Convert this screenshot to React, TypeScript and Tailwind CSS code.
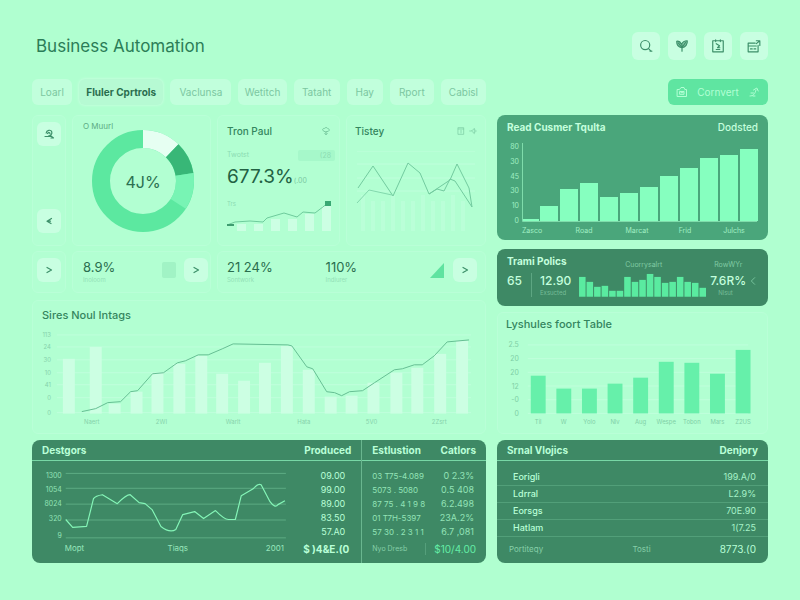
import React from "react";

const tabs = ["Loarl", "Fluler Cprtrols", "Vaclunsa", "Wetitch", "Tataht", "Hay", "Rport", "Cabisl"];

const quarterBars = [2, 15, 32, 38, 24, 28, 34, 45, 53, 63, 66, 72];
const quarterTicks: [string, number][] = [["80", 7], ["30", 22], ["45", 37], ["30", 51], ["10", 66], ["0", 81]];
const quarterMonths: [string, number][] = [["Zasco", 35], ["Road", 87], ["Marcat", 140], ["Frid", 188], ["Julchs", 237]];

const pulseBars = [20, 15, 10, 11, 6, 6, 20, 15, 17, 23, 20, 14, 15, 20, 15, 14, 9];

const tableBars: [string, number][] = [
  ["Til", 38], ["W", 25], ["Yolo", 25], ["Nlv", 30], ["Aug", 36], ["Wespe", 52], ["Tobon", 51], ["Mars", 40], ["Z2US", 64],
];
const tableTicks = ["2.5", "20", "20", "12", "-0", "0"];

const intagBars: [number, number][] = [
  [36, 55], [63, 67], [82, 10], [104, 22], [125, 41], [147, 50], [169, 58], [190, 40], [212, 33], [233, 51],
  [255, 68], [277, 44], [299, 17], [320, 18], [342, 31], [365, 41], [386, 46], [409, 60], [431, 73],
];
const intagTicks: [string, number][] = [["113", 12], ["24", 24], ["30", 37], ["10", 50], ["41", 62], ["0", 75], ["0", 90]];
const intagMonths: [string, number][] = [["Naert", 59], ["2WI", 129], ["Warlt", 201], ["Hata", 272], ["5V0", 340], ["2Zsrt", 408]];

const designTicks: [string, number, number][] = [["1300", 15, 12], ["1054", 29, 27], ["8024", 43, 43], ["320", 58, 59], ["9", 75, 77]];

const produced = ["09.00", "99.00", "89.00", "83.50", "57.A0"];
const estimates: [string, string][] = [
  ["03 T75-4.089", "0 2.3%"],
  ["5073 . 5080", "0.5 408"],
  ["87 75 . 4 1 9 8", "6.2.498"],
  ["01 T7H-5397", "23A.2%"],
  ["57 30 . 2 3 1 1", "6.7 ,081"],
];
const regions: [string, string][] = [["Eorigli", "199.A/0"], ["Ldrral", "L2.9%"], ["Eorsgs", "70E.90"], ["Hatlam", "1(7.25"]];

function Panel({ className = "", children }: { className?: string; children: React.ReactNode }) {
  return <section className={`min-w-0 rounded-md border border-[#b9ffd7] bg-[#b2ffd2] ${className}`}>{children}</section>;
}

function IconButton({ label, className = "", children }: { label: string; className?: string; children: React.ReactNode }) {
  return (
    <button
      type="button"
      aria-label={label}
      className={`flex shrink-0 items-center justify-center rounded-md bg-[#c8ffe1] text-[#3c8f69] ${className}`}
    >
      {children}
    </button>
  );
}

function Glyph({ size = "size-3", children }: { size?: string; children: React.ReactNode }) {
  return (
    <svg
      viewBox="0 0 12 12"
      className={size}
      fill="none"
      stroke="currentColor"
      strokeWidth="1"
      strokeLinecap="round"
      strokeLinejoin="round"
      aria-hidden="true"
    >
      {children}
    </svg>
  );
}

const ChevronRight = () => (
  <Glyph>
    <path d="M4 3.5 8.5 6 4 8.500" strokeWidth="1.2" />
  </Glyph>
);

function Header() {
  return (
    <header className="flex h-7 items-center justify-between">
      <h1 className="pl-1 text-[17px] leading-6 text-[#2b7d57]">Business Automation</h1>
      <div className="flex gap-2">
        <IconButton label="Search" className="size-7">
          <Glyph size="size-3.5">
            <circle cx="5.3" cy="5.2" r="3.9" />
            <path d="M8.4 8.4 10 10.2M9.5 10.4h1.500" />
          </Glyph>
        </IconButton>
        <IconButton label="Favourites" className="size-7">
          <Glyph size="size-3.5">
            <path
              d="M1.5 2C3 1.500 4.500 2.500 5.600 4.500 6.500 2.500 8 1.500 10.500 1.500 10.800 4.500 9 7.200 6 7.500 3 7.200 1.400 5 1.500 2Z"
              fill="currentColor"
              fillOpacity=".5"
            />
            <path d="M6 5v5.500M3 3.500l3 4 3-4.500" />
          </Glyph>
        </IconButton>
        <IconButton label="Schedule" className="size-7">
          <Glyph size="size-3.5">
            <path d="M1.500 1.500h9v9.500h-9zM4 .8v1.400M8 .8v1.400M4.500 4l2.800 1.800L5.600 7.500h2M4.500 9h3" />
          </Glyph>
        </IconButton>
        <IconButton label="Reports" className="size-7">
          <Glyph size="size-3.5">
            <path d="M9.500 5.500V11H1V3.500h6M1 6h7M3 8.500h1.500M6 8.500h1.500M8 1.500h3v4M8 4l3-2.500" />
          </Glyph>
        </IconButton>
      </div>
    </header>
  );
}

function Toolbar() {
  return (
    <div className="mt-[19px] grid grid-cols-[454fr_271fr] gap-x-[11px]">
      <nav aria-label="Sections" className="grid h-[26px] grid-cols-[40fr_84fr_61fr_48fr_46fr_36fr_44fr_45fr] gap-[7px]">
        {tabs.map((tab, i) => (
          <button
            key={tab}
            type="button"
            aria-current={i === 1 ? "page" : undefined}
            className={
              i === 1
                ? "rounded-md bg-[#b6fad3] text-[10px] font-bold whitespace-nowrap text-[#2a6e4e] shadow-[0_0_3px_#d2ffe6]"
                : "rounded-md bg-[#c1ffdc] text-[10px] whitespace-nowrap text-[#7cc7a1]"
            }
          >
            {tab}
          </button>
        ))}
      </nav>
      <button
        type="button"
        className="flex h-[26px] w-[100px] items-center justify-between justify-self-end rounded-md bg-[#5fe5a1] px-2 text-[10px] text-[#b2ffd4]"
      >
        <Glyph>
          <path d="M1.500 3.500h2L5 1.500h3l.8 2h1.700v7h-9zM4 5.500h4v2.800H4zM4 5.500l2 1.500 2-1.500" />
        </Glyph>
        Cornvert
        <Glyph>
          <path d="M2 10c3.500 0 5-2 6-6M5.500 4 8.800 2l1.400 3M3 7h2.500M5 10h2" />
        </Glyph>
      </button>
    </div>
  );
}

function ShareDonut() {
  const ring = { cx: 51, cy: 51, r: 42, fill: "none", strokeWidth: 18, pathLength: 360 };
  return (
    <svg viewBox="0 0 102 102" className="mx-auto -mt-0.5 block w-[102px]" role="img" aria-label="Share">
      <g transform="rotate(-90 51 51)">
        <circle {...ring} className="stroke-[#5ce8a0]" />
        <circle {...ring} strokeDasharray="44 316" className="stroke-[#e6fff2]" />
        <circle {...ring} strokeDasharray="37 323" strokeDashoffset="-44" className="stroke-[#38b777]" />
        <circle {...ring} strokeDasharray="42 318" strokeDashoffset="-81" className="stroke-[#78f4b4]" />
      </g>
      <text x="51" y="52" textAnchor="middle" dominantBaseline="central" className="fill-[#2b7050] text-[16px]">
        4J%
      </text>
    </svg>
  );
}

function Overview() {
  return (
    <div className="grid grid-cols-[34fr_139fr_123fr_140fr] gap-x-1.5 gap-y-[5px]">
      <Panel className="flex h-[131px] flex-col items-center justify-between pt-1.5 pb-3">
        <IconButton label="Find" className="size-6">
          <Glyph>
            <path d="M3.200 5C3.500 2 8 1.200 8.800 4c.5 2-1 3.500-3.300 4M2 8.500h6M4.500 5.500c1-1.500 2.500-1 2.500.2M8 8l2.500 2H8" strokeWidth="1.200" />
          </Glyph>
        </IconButton>
        <IconButton label="Back" className="size-6">
          <Glyph>
            <path d="M8.500 3.500 4 6.200l4 2.300M4.500 6.200h3" strokeWidth="1.200" />
          </Glyph>
        </IconButton>
      </Panel>

      <Panel className="pt-1 pl-0.5">
        <h2 className="pl-2 text-[8px] leading-3 text-[#5cab83]">O Muurl</h2>
        <ShareDonut />
      </Panel>

      <Panel className="pt-[7px] pr-1 pl-[9px]">
        <div className="flex h-4 items-center justify-between pr-1">
          <h2 className="text-[10px] font-medium text-[#34855e]">Tron Paul</h2>
          <span className="text-[#6cbf95]">
            <Glyph size="size-2.5">
              <path d="M3 6C1 5 2 2.500 4 3c1-1.500 3.500-1.500 4 0 2 0 2.500 2.500 1 3.200L6 7zM6 7v3M4.500 9 6 10.500 7.500 9" />
            </Glyph>
          </span>
        </div>
        <div className="mt-2.5 flex h-3 items-center justify-between text-[7px] text-[#8cdcb2]">
          <span>Twotst</span>
          <span className="w-[37px] rounded-xs bg-[#a6f8ca] pr-1 text-right leading-[11px]">(28</span>
        </div>
        <p className="mt-1 flex h-6 items-center text-[19px] leading-6 text-[#226143]">
          677.3%<span className="pt-2 text-[7px] text-[#7cc9a2]">(.00</span>
        </p>
        <svg viewBox="0 0 108 36" className="mt-2 block w-full" role="img" aria-label="Trend">
          <text x="0" y="6" dominantBaseline="central" className="fill-[#8cdcb2] text-[6px]">Trs</text>
          {[7, 7, 12, 12, 17, 25].map((h, i) => (
            <rect key={i} x={10 + i * 17} y={34 - h} width="9" height={h} className="fill-[#ccffe3]" />
          ))}
          <polyline points="0,28 8,25 23,24 36,25 40,21 57,16 70,20 76,15 88,16 101,6" className="fill-none stroke-[#6ecb9c]" />
          <rect x="0" y="27" width="7" height="2" className="fill-[#3f9c70]" />
          <rect x="98" y="4" width="6" height="5" className="fill-[#39a873]" />
        </svg>
      </Panel>

      <Panel className="px-2 pt-[7px]">
        <div className="flex h-4 items-center justify-between">
          <h2 className="text-[10px] font-medium text-[#34855e]">Tistey</h2>
          <div className="flex gap-1 text-[#79c9a0]">
            <Glyph size="size-2">
              <path d="M2 1h8v10H2zM2 3h8M6 5v4" />
            </Glyph>
            <Glyph size="size-2">
              <path d="M1 6h3l4-4v8L4 6M9 4l2 2-2 2" />
            </Glyph>
          </div>
        </div>
        <svg viewBox="0 0 122 84" className="mt-3 block w-full" role="img" aria-label="History">
          {[0, 13, 27, 40].map((y) => (
            <path key={y} d={`M2 ${y}H120`} className="stroke-[#bfffdc]" />
          ))}
          {Array.from({ length: 11 }, (_, i) => (
            <rect key={i} x={6 + i * 10} y={i % 3 === 0 ? 44 : 50} width="4" height={i % 3 === 0 ? 36 : 30} className="fill-[#baffd8]" />
          ))}
          <polyline points="3,37 18,15 38,45 53,12 65,22 74,43 95,29 102,13 114,37 117,56" className="fill-none stroke-[#72cb9f]" />
          <polyline points="2,52 14,39 37,44" className="fill-none stroke-[#82d8ad]" />
          <polyline points="74,43 82,38 89,40 95,28 100,30 117,56" className="fill-none stroke-[#72cb9f]" />
        </svg>
      </Panel>

      <Panel className="flex h-[42px] items-center justify-center pb-1">
        <IconButton label="Next" className="size-6"><ChevronRight /></IconButton>
      </Panel>

      <Panel className="flex items-center pr-0.5 pb-1 pl-2.5">
        <Metric value="8.9%" note="Inoloom" />
        <span className="mr-2 ml-auto h-4 w-3.5 rounded-xs bg-[#a1f3c5]" />
        <IconButton label="Next metric" className="size-6"><ChevronRight /></IconButton>
      </Panel>

      <Panel className="col-span-2 grid grid-cols-[99fr_152fr] items-center pr-2 pb-1 pl-[9px]">
        <Metric value="21 24%" note="Sontwork" />
        <div className="flex items-center">
          <Metric value="110%" note="Indiurer" />
          <svg viewBox="0 0 16 16" className="mr-2 ml-auto size-4" aria-hidden="true">
            <path d="M1 16 15 1v15z" className="fill-[#5fe3a0]" />
          </svg>
          <IconButton label="More metrics" className="size-6"><ChevronRight /></IconButton>
        </div>
      </Panel>
    </div>
  );
}

function Metric({ value, note }: { value: string; note: string }) {
  return (
    <div className="pt-1">
      <p className="text-[13px] leading-4 text-[#2a6e4e]">{value}</p>
      <p className="text-[6px] leading-2.5 text-[#93dfb7]">{note}</p>
    </div>
  );
}

function IntagsChart() {
  return (
    <Panel className="mt-[7px] h-[134px] pt-1.5">
      <h2 className="pl-[9px] text-[11px] leading-4 font-medium text-[#34855e]">Sires Noul Intags</h2>
      <svg viewBox="0 0 454 108" className="block w-full" role="img" aria-label="Sires Noul Intags">
        {intagTicks.map(([label, y], i) => (
          <g key={i}>
            <path d={`M24 ${y}H440`} className="stroke-[#bfffdc]" />
            <text x="18" y={y} textAnchor="end" dominantBaseline="central" className="fill-[#86d2ab] text-[6px]">{label}</text>
          </g>
        ))}
        {intagBars.map(([x, h]) => (
          <rect key={x} x={x - 6} y={91 - h} width="12" height={h} className="fill-[#ccffe3]" />
        ))}
        <path
          d="M49 89 63 86 75 80 88 79 98 69 105 68 120 51 131 50 145 40 153 38 166 32 176 32 190 26 201 21 256 22 260 23 275 44 281 46 295 69 303 70 310 73 318 69 331 68 343 60 363 47 371 46 383 42 391 42 403 33 416 19 438 17"
          className="fill-none stroke-[#66be93]"
          strokeLinejoin="round"
        />
        {intagMonths.map(([label, x]) => (
          <text key={label} x={x} y="99" textAnchor="middle" dominantBaseline="central" className="fill-[#86d2ab] text-[6px]">{label}</text>
        ))}
      </svg>
    </Panel>
  );
}

function DesignsCard() {
  const head = "h-[21px] border-b border-[#78d8a6] text-[10px] font-bold";
  return (
    <section className="mt-1.5 grid h-[123px] grid-cols-[332fr_122fr] overflow-hidden rounded-lg bg-[#3e8965] text-[#b9ffd7]">
      <div className="grid grid-cols-[270fr_62fr] border-r border-[#69b68f]">
        <div>
          <h2 className={`${head} pl-2.5 leading-5`}>Destgors</h2>
          <svg viewBox="0 0 270 102" className="block w-full" role="img" aria-label="Destgors">
            {designTicks.map(([label, ty, gy]) => (
              <g key={label}>
                <path d={`M34 ${gy}.5H256`} className="stroke-[#5dac84]" />
                <text x="30" y={ty} textAnchor="end" dominantBaseline="central" className="fill-[#93e3b7] text-[7px]">{label}</text>
              </g>
            ))}
            <path
              d="M34 59 41 67 55 66 62 38Q64 35 71 34L86 43Q95 34 99 34L108 42 114 43 121 49 130 66Q139 73 145 69L152 54 164 51 173 58 185 50Q194 59 198 59L205 59 211 35 223 28Q228 22 231 24L240 41Q245 48 248 44L255 40"
              className="fill-none stroke-[#84f5b7]"
              strokeWidth="1.2"
              strokeLinejoin="round"
            />
            <g className="fill-[#97e6bb] text-[8px]">
              <text x="33" y="88" dominantBaseline="central">Mopt</text>
              <text x="147" y="88" textAnchor="middle" dominantBaseline="central">Tiaqs</text>
              <text x="254" y="88" textAnchor="end" dominantBaseline="central">2001</text>
            </g>
          </svg>
        </div>
        <table className="h-[123px] w-full border-separate border-spacing-0 text-right text-[9px]">
          <thead>
            <tr><th className={`${head} pr-2.5 text-right`}>Produced</th></tr>
          </thead>
          <tbody className="before:block before:h-2">
            {produced.map((v) => (
              <tr key={v}><td className="h-[14px] pr-4 leading-3">{v}</td></tr>
            ))}
          </tbody>
          <tfoot>
            <tr><td className="h-6 pr-3 pb-1 text-[10px] font-bold">$ )4&amp;E.(0</td></tr>
          </tfoot>
        </table>
      </div>
      <table className="h-[123px] w-full border-separate border-spacing-0 text-[9px] whitespace-nowrap">
        <thead>
          <tr>
            <th className={`${head} pl-2.5 text-left`}>Estlustion</th>
            <th className={`${head} pr-2.5 text-right`}>Catlors</th>
          </tr>
        </thead>
        <tbody className="before:block before:h-2">
          {estimates.map(([a, b]) => (
            <tr key={a} className="text-[#93e3b7]">
              <td className="h-[14px] pl-2.5 text-[8px] leading-3">{a}</td>
              <td className="pr-3 text-right leading-3">{b}</td>
            </tr>
          ))}
        </tbody>
        <tfoot>
          <tr>
            <td className="h-6 pb-1 pl-2.5 text-[7px] text-[#86cfa8]">Nyo Dresb</td>
            <td className="pr-2.5 pb-1 text-right text-[10px] text-[#63eda5]">
              <span className="border-l border-[#559f7b] pl-2">$10/4.00</span>
            </td>
          </tr>
        </tfoot>
      </table>
    </section>
  );
}

function QuarterCard() {
  return (
    <section className="h-[125px] rounded-lg bg-[#4aa67b] text-[#c4ffdd]">
      <div className="flex h-6 items-center justify-between px-2.5 text-[10px] font-bold">
        <h2>Read Cusmer Tqulta</h2>
        <span className="font-medium">Dodsted</span>
      </div>
      <svg viewBox="0 0 271 101" className="block w-full" role="img" aria-label="Read Cusmer Tqulta">
        <path d="M25.5 4V82.5H260" className="fill-none stroke-[#7fdcab]" />
        {quarterTicks.map(([label, y]) => (
          <text key={y} x="22" y={y} textAnchor="end" dominantBaseline="central" className="fill-[#a0efc4] text-[7px]">{label}</text>
        ))}
        {quarterBars.map((h, i) => (
          <rect key={i} x={i === 0 ? 26 : 23 + i * 20} y={82 - h} width={i === 0 ? 16 : 18} height={h} className="fill-[#86ffbf]" />
        ))}
        {quarterMonths.map(([label, x]) => (
          <text key={label} x={x} y="91" textAnchor="middle" dominantBaseline="central" className="fill-[#a0efc4] text-[7px]">{label}</text>
        ))}
      </svg>
    </section>
  );
}

function PulseCard() {
  return (
    <section className="mt-[9px] grid h-[57px] grid-cols-[73fr_130fr_36fr_12fr] rounded-lg bg-[#3e8965] px-2.5 text-[#c4ffdd]">
      <div className="pt-1">
        <h2 className="text-[10px] leading-4 font-bold whitespace-nowrap">Trami Polics</h2>
        <div className="mt-1 flex">
          <p className="h-6 w-[25px] border-r border-[#5da682] text-[12px] leading-4 font-medium">65</p>
          <div className="pl-2">
            <p className="text-[12px] leading-4 font-medium">12.90</p>
            <p className="text-[6px] leading-2 text-[#76bd98]">Exsucted</p>
          </div>
        </div>
      </div>
      <div className="pt-3">
        <p className="text-center text-[7px] leading-2 text-[#80cba4]">Cuorrysalrt</p>
        <svg viewBox="0 0 130 28" className="block w-full" role="img" aria-label="Cuorrysalrt">
          {pulseBars.map((h, i) => (
            <rect key={i} x={i * 7.6} y={28 - h} width="6.6" height={h} className="fill-[#5aeba0]" />
          ))}
        </svg>
      </div>
      <div className="pt-3 pl-0.5 whitespace-nowrap">
        <p className="pl-1 text-[7px] leading-2 text-[#80cba4]">RowWYr</p>
        <p className="mt-1 text-[12px] leading-4 font-medium">7.6R%</p>
        <p className="pl-2 text-[6px] leading-2 text-[#76bd98]">Nlsut</p>
      </div>
      <button type="button" aria-label="Previous" className="mt-6 flex h-4 items-center justify-end text-[#7fcda5]">
        <Glyph size="size-2.5">
          <path d="M8 2 4 6l4 4" />
        </Glyph>
      </button>
    </section>
  );
}

function TableChart() {
  return (
    <Panel className="mt-1.5 h-[122px] pt-[3px]">
      <h2 className="pl-2 text-[11px] leading-4 font-medium text-[#34855e]">Lyshules foort Table</h2>
      <svg viewBox="0 0 271 98" className="mt-1 block w-full" role="img" aria-label="Lyshules foort Table">
        {tableTicks.map((label, i) => (
          <g key={i}>
            <path d={`M30 ${9 + i * 13.8}H252`} className="stroke-[#bfffdc]" />
            <text x="21" y={9 + i * 13.8} textAnchor="end" dominantBaseline="central" className="fill-[#7fcfa6] text-[7px]">{label}</text>
          </g>
        ))}
        {tableBars.map(([label, h], i) => (
          <g key={label}>
            <rect x={33 + i * 25.8} y={78 - h} width="15" height={h} className="fill-[#66f0aa]" />
            <text x={40.5 + i * 25.8} y="86" textAnchor="middle" dominantBaseline="central" className="fill-[#7fcfa6] text-[6px]">{label}</text>
          </g>
        ))}
      </svg>
    </Panel>
  );
}

function RegionsCard() {
  const head = "h-[21px] border-b border-[#78d8a6] px-2.5 text-[10px] font-bold";
  return (
    <section className="mt-1.5 h-[123px] overflow-hidden rounded-lg bg-[#3e8965] text-[#b9ffd7]">
      <table className="w-full border-separate border-spacing-0 text-[9px] leading-3">
        <thead>
          <tr>
            <th colSpan={2} className={`${head} text-left`}>Srnal Vlojics</th>
            <th className={`${head} text-right`}>Denjory</th>
          </tr>
        </thead>
        <tbody className="before:block before:h-2">
          {regions.map(([name, value]) => (
            <tr key={name}>
              <td colSpan={2} className="h-[17px] border-b border-[#529f79] pl-4 font-medium">{name}</td>
              <td className="border-b border-[#529f79] pr-3 text-right text-[#a6f2c8]">{value}</td>
            </tr>
          ))}
        </tbody>
        <tfoot>
          <tr className="text-[8px] text-[#86cfa8]">
            <td className="h-6 w-1/2 pl-3">Portiteqy</td>
            <td>Tosti</td>
            <td className="pr-3 text-right text-[10px] text-[#b9ffd7]">8773.(0</td>
          </tr>
        </tfoot>
      </table>
    </section>
  );
}

export default function App() {
  return (
    <main className="min-h-screen bg-[#b0ffd0] px-8 pt-8 pb-9 font-[Inter,'Liberation_Sans',sans-serif]">
      <Header />
      <Toolbar />
      <div className="mt-2.5 grid grid-cols-[454fr_271fr] items-start gap-x-[11px]">
        <div className="min-w-0">
          <Overview />
          <IntagsChart />
          <DesignsCard />
        </div>
        <div className="min-w-0">
          <QuarterCard />
          <PulseCard />
          <TableChart />
          <RegionsCard />
        </div>
      </div>
    </main>
  );
}
